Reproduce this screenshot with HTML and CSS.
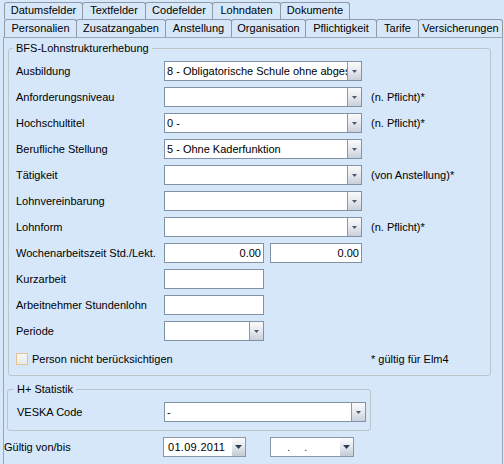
FILE: index.html
```html
<!DOCTYPE html>
<html>
<head>
<meta charset="utf-8">
<link rel="stylesheet" href="styles.css">
</head>
<body>
<div class="window">
  <div class="tabs">
    <div class="tabrow row1">
      <div class="tab t-datum">Datumsfelder</div>
      <div class="tab t-text">Textfelder</div>
      <div class="tab t-code">Codefelder</div>
      <div class="tab t-lohn">Lohndaten</div>
      <div class="tab t-doku">Dokumente</div>
    </div>
    <div class="tabrow row2">
      <div class="tab t-pers">Personalien</div>
      <div class="tab t-zus">Zusatzangaben</div>
      <div class="tab t-anst">Anstellung</div>
      <div class="tab t-org">Organisation</div>
      <div class="tab t-pfl">Pflichtigkeit</div>
      <div class="tab t-tar">Tarife</div>
      <div class="tab t-vers">Versicherungen</div>
    </div>
  </div>
  <div class="panel">
    <fieldset class="group bfs">
      <legend>BFS-Lohnstrukturerhebung</legend>
      <div class="form">
        <div class="label">Ausbildung</div>
        <div class="combo"><span class="value">8 - Obligatorische Schule ohne abgeschlossene Berufsausbildung</span><span class="btn"><svg width="5" height="3" viewBox="0 0 5 3"><path d="M0 0H5L2.5 3Z"/></svg></span></div>
        <div class="note"></div>

        <div class="label">Anforderungsniveau</div>
        <div class="combo"><span class="value"></span><span class="btn"><svg width="5" height="3" viewBox="0 0 5 3"><path d="M0 0H5L2.5 3Z"/></svg></span></div>
        <div class="note">(n. Pflicht)*</div>

        <div class="label">Hochschultitel</div>
        <div class="combo"><span class="value">0 -</span><span class="btn"><svg width="5" height="3" viewBox="0 0 5 3"><path d="M0 0H5L2.5 3Z"/></svg></span></div>
        <div class="note">(n. Pflicht)*</div>

        <div class="label">Berufliche Stellung</div>
        <div class="combo"><span class="value">5 - Ohne Kaderfunktion</span><span class="btn"><svg width="5" height="3" viewBox="0 0 5 3"><path d="M0 0H5L2.5 3Z"/></svg></span></div>
        <div class="note"></div>

        <div class="label">Tätigkeit</div>
        <div class="combo"><span class="value"></span><span class="btn"><svg width="5" height="3" viewBox="0 0 5 3"><path d="M0 0H5L2.5 3Z"/></svg></span></div>
        <div class="note">(von Anstellung)*</div>

        <div class="label">Lohnvereinbarung</div>
        <div class="combo"><span class="value"></span><span class="btn"><svg width="5" height="3" viewBox="0 0 5 3"><path d="M0 0H5L2.5 3Z"/></svg></span></div>
        <div class="note"></div>

        <div class="label">Lohnform</div>
        <div class="combo"><span class="value"></span><span class="btn"><svg width="5" height="3" viewBox="0 0 5 3"><path d="M0 0H5L2.5 3Z"/></svg></span></div>
        <div class="note">(n. Pflicht)*</div>

        <div class="label">Wochenarbeitszeit Std./Lekt.</div>
        <div class="pair">
          <div class="textbox num w100">0.00</div>
          <div class="textbox num w92">0.00</div>
        </div>
        <div class="note"></div>

        <div class="label">Kurzarbeit</div>
        <div class="pair"><div class="textbox w100"></div></div>
        <div class="note"></div>

        <div class="label">Arbeitnehmer Stundenlohn</div>
        <div class="pair"><div class="textbox w100"></div></div>
        <div class="note"></div>

        <div class="label">Periode</div>
        <div class="pair"><div class="combo short"><span class="value"></span><span class="btn"><svg width="5" height="3" viewBox="0 0 5 3"><path d="M0 0H5L2.5 3Z"/></svg></span></div></div>
        <div class="note"></div>
      </div>
      <div class="foot">
        <div class="check"><span class="box"></span><span>Person nicht berücksichtigen</span></div>
        <div class="note">* gültig für Elm4</div>
      </div>
    </fieldset>

    <fieldset class="group hplus">
      <legend>H+ Statistik</legend>
      <div class="form2">
        <div class="label">VESKA Code</div>
        <div class="combo wide"><span class="value">-</span><span class="btn"><svg width="5" height="3" viewBox="0 0 5 3"><path d="M0 0H5L2.5 3Z"/></svg></span></div>
      </div>
    </fieldset>

    <div class="validity">
      <div class="label vlabel">Gültig von/bis</div>
      <div class="date"><span class="dval">01.09.2011</span><span class="dbtn"><svg width="7" height="4" viewBox="0 0 7 4"><path d="M0 0H7L3.5 4Z"/></svg></span></div>
      <div class="date second"><span class="dval"><span class="dot d1">.</span><span class="dot d2">.</span></span><span class="dbtn"><svg width="7" height="4" viewBox="0 0 7 4"><path d="M0 0H7L3.5 4Z"/></svg></span></div>
    </div>
  </div>
</div>
</body>
</html>
```

FILE: styles.css
```css
* { box-sizing: border-box; }
html, body {
  margin: 0;
  padding: 0;
  background: #d6e7f9;
}
body {
  width: 504px;
  height: 464px;
  overflow: hidden;
  font-family: "Liberation Sans", Arial, sans-serif;
  font-size: 11px;
  color: #000;
}
.window {
  width: 504px;
  height: 464px;
  display: flex;
  flex-direction: column;
}

/* tabs */
.tabs { display: flex; flex-direction: column; }
.tabrow { display: flex; margin-left: 4px; }
.row1 { margin-top: 2px; }
.tab {
  border: 1px solid #8f9aa6;
  border-bottom: none;
  border-radius: 3px 3px 0 0;
  margin-right: -1px;
  text-align: center;
  white-space: nowrap;
  background: #d6e7f9;
  color: #000;
}
.row1 .tab { height: 17px; line-height: 15px; }
.row2 .tab { height: 18px; line-height: 16px; }
.t-datum { width: 79px; }
.t-text { width: 64px; }
.t-code { width: 68px; }
.t-lohn { width: 69px; }
.t-doku { width: 70px; }
.t-pers { width: 73px; }
.t-zus { width: 90px; }
.t-anst { width: 67px; }
.t-org { width: 75px; }
.t-pfl { width: 72px; }
.t-tar { width: 43px; }
.t-vers { width: 85px; }

/* panel */
.panel {
  margin-left: 3px;
  width: 500px;
  flex: 1;
  border: 1px solid #9ea7b1;
  border-bottom: none;
  display: flex;
  flex-direction: column;
}

.group {
  margin: 0;
  min-inline-size: 0;
  border: 1px solid #bcc4cc;
  border-radius: 3px;
}
.group legend {
  padding: 0 3px;
  margin-left: -3px;
  line-height: 14px;
  height: 14px;
}
.bfs {
  margin: 3px 0 0 4px;
  width: 483px;
  padding: 6px 0 10px 7px;
}
.hplus {
  margin: 6px 0 0 3px;
  width: 364px;
  padding: 6px 0 8px 9px;
}

.form {
  display: grid;
  grid-template-columns: 148px 198px auto;
  grid-auto-rows: 20px;
  row-gap: 6px;
  align-items: center;
}
.form2 {
  display: grid;
  grid-template-columns: 147px 202px;
  grid-auto-rows: 20px;
  align-items: center;
}
.label { white-space: nowrap; }
.note { padding-left: 9px; white-space: nowrap; }

.combo {
  height: 20px;
  width: 198px;
  border: 1px solid #8191a6;
  background: #fff;
  display: flex;
}
.combo.short { width: 100px; }
.combo.wide { width: 202px; }
.combo .value {
  flex: 1;
  min-width: 0;
  overflow: hidden;
  white-space: nowrap;
  padding-left: 2px;
  line-height: 18px;
}
.btn {
  width: 14px;
  flex: none;
  border-left: 1px solid #8a99ad;
  background: linear-gradient(#f9fafb, #e6e9ee 50%, #c9d0da);
  display: flex;
  align-items: center;
  justify-content: center;
}
.btn svg { fill: #4b5872; display: block; }

.pair { display: flex; gap: 6px; height: 20px; }
.textbox {
  height: 20px;
  border: 1px solid #8191a6;
  background: #fff;
  line-height: 18px;
  padding: 0 2px;
  white-space: nowrap;
}
.textbox.num { text-align: right; }
.w100 { width: 100px; }
.w92 { width: 92px; }

.foot {
  display: grid;
  grid-template-columns: 346px auto;
  margin-top: 12px;
  height: 12px;
  align-items: center;
}
.check { display: flex; align-items: center; gap: 4px; white-space: nowrap; }
.box {
  width: 12px;
  height: 12px;
  border: 1px solid #e0c48e;
  background: linear-gradient(#f6f6f6, #e9e9e9);
}

.validity {
  display: flex;
  align-items: center;
  margin-top: 6px;
  height: 20px;
}
.vlabel { width: 159px; }
.date {
  width: 83px;
  height: 20px;
  border: 1px solid #8a97a9;
  background: #fff;
  display: flex;
}
.date.second { width: 84px; margin-left: 24px; }
.dval {
  flex: 1;
  padding-left: 4px;
  line-height: 18px;
  white-space: nowrap;
  overflow: hidden;
  letter-spacing: 0.3px;
}
.dbtn {
  width: 13px;
  flex: none;
  background: linear-gradient(#fbfcfd, #e3e7ec 50%, #c3cbd6);
  display: flex;
  align-items: center;
  justify-content: center;
}
.dbtn svg { fill: #2e3b58; display: block; }
.dot { display: inline-block; }
.d1 { margin-left: 12px; color: #1b1b5a; }
.d2 { margin-left: 14px; color: #6a1030; }
```
